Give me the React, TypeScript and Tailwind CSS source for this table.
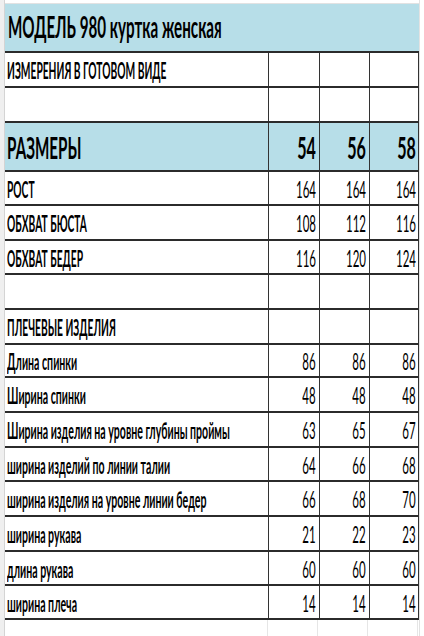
import React from "react";

type Row = {
  label: string;
  vals: string[];
  h: string;
  big?: boolean;
  blue?: boolean;
  caps?: boolean;
};

const rows: Row[] = [
  { label: "ИЗМЕРЕНИЯ В ГОТОВОМ ВИДЕ", vals: ["", "", ""], h: "h-[35px]", caps: true },
  { label: "", vals: ["", "", ""], h: "h-[35px]" },
  { label: "РАЗМЕРЫ", vals: ["54", "56", "58"], h: "h-[49px]", big: true, blue: true },
  { label: "РОСТ", vals: ["164", "164", "164"], h: "h-[34px]", caps: true },
  { label: "ОБХВАТ БЮСТА", vals: ["108", "112", "116"], h: "h-[35px]", caps: true },
  { label: "ОБХВАТ БЕДЕР", vals: ["116", "120", "124"], h: "h-[34px]", caps: true },
  { label: "", vals: ["", "", ""], h: "h-[35px]" },
  { label: "ПЛЕЧЕВЫЕ ИЗДЕЛИЯ", vals: ["", "", ""], h: "h-[35px]", caps: true },
  { label: "Длина спинки", vals: ["86", "86", "86"], h: "h-[33px]" },
  { label: "Ширина спинки", vals: ["48", "48", "48"], h: "h-[35px]" },
  { label: "Ширина изделия на уровне глубины проймы", vals: ["63", "65", "67"], h: "h-[35px]" },
  { label: "ширина изделий по линии талии", vals: ["64", "66", "68"], h: "h-[34px]" },
  { label: "ширина изделия на уровне линии бедер", vals: ["66", "68", "70"], h: "h-[35px]" },
  { label: "ширина рукава", vals: ["21", "22", "23"], h: "h-[35px]" },
  { label: "длина рукава", vals: ["60", "60", "60"], h: "h-[34px]" },
  { label: "ширина плеча", vals: ["14", "14", "14"], h: "h-[34px]" },
];

const font = { fontFamily: "Lato, 'Open Sans', sans-serif" };

export default function App() {
  return (
    <div className="w-[424px] h-[636px] bg-white flex overflow-hidden text-black" style={font}>
      <div className="w-[5px] h-full bg-[#efefef] border-r border-[#d4d4d4] shrink-0" />
      <div className="flex flex-col w-[414px] shrink-0">
        <div className="h-[4px] border-b border-[#e2e2e2]" />
        <div className="h-[49px] bg-[#b7dee8] border-b-2 border-[#2b2b2b] flex items-center pl-[3px] pb-[2px]">
          <span className="inline-block origin-left scale-x-[0.49] whitespace-nowrap text-[31px] font-bold leading-none">
            МОДЕЛЬ 980 куртка женская
          </span>
        </div>
        {rows.map((r, i) => (
          <div
            key={i}
            className={`${r.h} flex border-b-2 border-[#2b2b2b] border-r border-r-[#333] w-[414px] ${r.blue ? "bg-[#b7dee8]" : "bg-white"}`}
          >
            <div className="w-[263px] shrink-0 flex items-center pl-[2px] pt-[2px] overflow-hidden">
              <span
                className={`inline-block origin-left whitespace-nowrap leading-none ${
                  r.big
                    ? "text-[31px] font-bold scale-x-[0.49]"
                    : r.caps
                    ? "text-[23px] font-bold scale-x-[0.445]"
                    : "text-[23px] font-bold scale-x-[0.46]"
                }`}
              >
                {r.label}
              </span>
            </div>
            {r.vals.map((v, j) => (
              <div
                key={j}
                className={`${j === 0 ? "w-[51px]" : "w-[50px]"} shrink-0 border-l border-[#333] flex items-center justify-end pr-[3px] pt-[2px] overflow-hidden`}
              >
                <span
                  className={`inline-block origin-right whitespace-nowrap leading-none ${
                    r.big ? "text-[31px] font-bold scale-x-[0.52]" : "text-[23px] font-normal scale-x-[0.5]"
                  }`}
                >
                  {v}
                </span>
              </div>
            ))}
          </div>
        ))}
        <div className="flex-1 flex">
          <div className="w-[263px] border-r border-[#e6e6e6]" />
          <div className="w-[50px] border-r border-[#e6e6e6]" />
          <div className="w-[50px] border-r border-[#e6e6e6]" />
          <div className="w-[50px] border-r border-[#e6e6e6]" />
        </div>
      </div>
      <div className="flex-1 border-l border-[#e2e2e2]" />
    </div>
  );
}
